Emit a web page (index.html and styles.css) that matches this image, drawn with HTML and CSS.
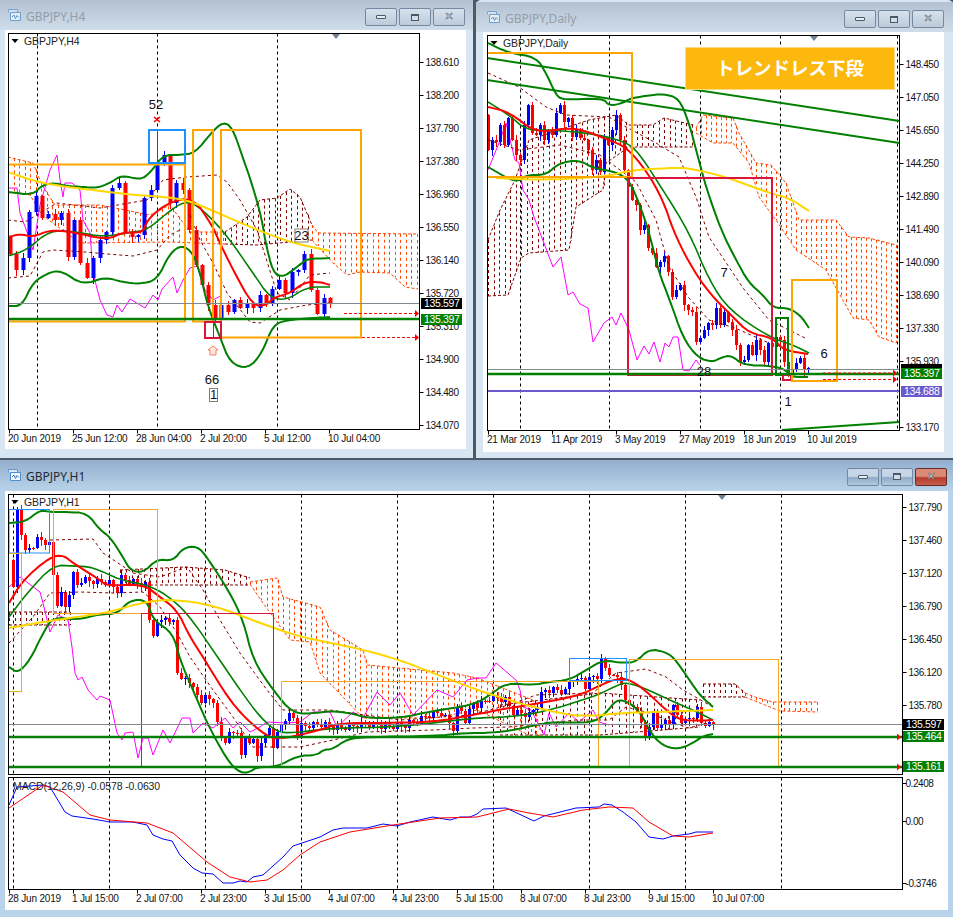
FILE: index.html
```html
<!DOCTYPE html>
<html lang="ja">
<head>
    <meta charset="UTF-8">
    <meta name="viewport" content="width=device-width, initial-scale=1.0">
    <title>GBPJPY Charts</title>
    <link rel="stylesheet" href="styles.css">
</head>
<body>
    <svg class="defs" width="0" height="0">
        <symbol id="winIcon" viewBox="0 0 15 15">
            <path d="M1.5 4.5V1.5H10.5V4" fill="#dcebf8" stroke="#5b97d3"/>
            <path d="M3.5 12.5V4.5H13.5V12.5Z" fill="#f2f8fd" stroke="#4f8fd0"/>
            <path d="M5 9L7 7L8.5 10.5L10 7.5L12 9.5" fill="none" stroke="#3f7fc0"/>
        </symbol>
    </svg>

    <div class="desk">
        <section class="window h4">
            <div class="titlebar">
                <svg class="icon"><use href="#winIcon"/></svg>
                <span class="title">GBPJPY,H4</span>
                <div class="buttons">
                    <span class="btn"><i class="min"></i></span>
                    <span class="btn"><i class="max"></i></span>
                    <span class="btn"><i class="cross">&#10005;</i></span>
                </div>
            </div>
            <div class="client"><svg id="chartH4" width="461" height="419" viewBox="5 30 461 419"></svg></div>
        </section>

        <section class="window daily">
            <div class="titlebar">
                <svg class="icon"><use href="#winIcon"/></svg>
                <span class="title">GBPJPY,Daily</span>
                <div class="buttons">
                    <span class="btn"><i class="min"></i></span>
                    <span class="btn"><i class="max"></i></span>
                    <span class="btn"><i class="cross">&#10005;</i></span>
                </div>
            </div>
            <div class="client"><svg id="chartD1" width="461" height="420" viewBox="483 32 461 420"></svg></div>
        </section>

        <section class="window h1 active">
            <div class="titlebar">
                <svg class="icon"><use href="#winIcon"/></svg>
                <span class="title">GBPJPY,H1</span>
                <div class="buttons">
                    <span class="btn"><i class="min"></i></span>
                    <span class="btn"><i class="max"></i></span>
                    <span class="btn close"><i class="cross">&#10005;</i></span>
                </div>
            </div>
            <div class="client"><svg id="chartH1" width="943" height="419" viewBox="5 491 943 419"></svg></div>
        </section>
    </div>

    <script src="chart.js"></script>
</body>
</html>
```

FILE: styles.css
```css
html, body {
    margin: 0;
    padding: 0;
}
body {
    width: 953px;
    height: 917px;
    overflow: hidden;
    background-color: #4c5a68;
    font-family: "Liberation Sans", Arial, sans-serif;
}
.defs {
    display: block;
    height: 0;
}
.desk {
    display: grid;
    grid-template-columns: 473px 477px;
    grid-template-rows: 458px 457px;
    column-gap: 3px;
    row-gap: 2px;
}
.window {
    display: flex;
    flex-direction: column;
    background: #d8e5f2;
    box-sizing: border-box;
}
.h1 {
    grid-column: 1 / 3;
    background: #b9d3ea;
    padding-bottom: 7px;
    width: 953px;
}
.daily {
    padding-top: 2px;
    border-radius: 5px 5px 0 0;
}
.titlebar {
    height: 30px;
    display: flex;
    align-items: center;
    box-sizing: border-box;
    padding: 0 8px 0 7px;
    background: linear-gradient(#b3c2d1, #cfdcea);
}
.daily .titlebar {
    padding-left: 10px;
    padding-right: 9px;
}
.h1 .titlebar {
    height: 31px;
    padding-right: 6px;
    background: linear-gradient(#94afce, #b9d3ea);
}
.icon {
    width: 15px;
    height: 15px;
    opacity: .75;
}
.h1 .icon {
    opacity: 1;
}
.title {
    margin-left: 4px;
    font-family: "Noto Sans", sans-serif;
    font-size: 12px;
    color: #919eac;
    padding-top: 2px;
}
.h1 .title {
    color: #1f2a36;
}
.buttons {
    margin-left: auto;
    display: flex;
    gap: 2px;
    margin-top: 4px;
}
.h1 .buttons {
    margin-top: 2px;
}
.btn {
    width: 30px;
    height: 16px;
    display: flex;
    align-items: center;
    justify-content: center;
    border: 1px solid #7488a0;
    border-radius: 2px;
    background: linear-gradient(#d6e1ec, #bccbdb);
}
.h1 .btn {
    background: linear-gradient(#c6d6e6 45%, #8faac8 55%, #b2cbe3);
}
.h1 .btn.close {
    background: linear-gradient(#dc8a78 45%, #b83a28 55%, #c4604c);
    border-color: #6a2a24;
}
.min {
    width: 8px;
    height: 2px;
    background: #e6edf3;
    border: 1px solid #4a5866;
    border-radius: 1px;
}
.max {
    width: 6px;
    height: 4px;
    border: 1px solid #4a5866;
    border-top-width: 2px;
    background: #d3dde8;
}
.cross {
    font-style: normal;
    font-weight: bold;
    font-size: 11px;
    line-height: 12px;
    color: #f2f5f8;
    font-family: "DejaVu Sans", sans-serif;
    -webkit-text-stroke: .5px #4a5866;
}
.client {
    width: 461px;
    margin-left: 5px;
    background: #fff;
    flex: none;
    line-height: 0;
}
.daily .client {
    margin-left: 7px;
}
.h1 .client {
    width: 943px;
}
.client svg {
    display: block;
}
.axis {
    font-family: "Liberation Sans", Arial, sans-serif;
    font-size: 10px;
    letter-spacing: -.45px;
    fill: #111;
}
.timeaxis {
    letter-spacing: -.2px;
}
.symbol {
    font-size: 10.5px;
    letter-spacing: -.1px;
    fill: #222;
}
.tag {
    font-family: "Liberation Sans", Arial, sans-serif;
    font-size: 10.5px;
    letter-spacing: -.35px;
    fill: #fff;
}
.note {
    font-family: "Liberation Sans", Arial, sans-serif;
    font-size: 13px;
    fill: #111;
    text-anchor: middle;
}
.banner {
    font-family: "Noto Sans CJK JP", sans-serif;
    font-size: 18.5px;
    font-weight: 700;
    fill: #fff;
    text-anchor: middle;
}
```

FILE: chart.js
```js
const GREEN = "#008000", RED = "#ff0000", BLUE = "#0000ff", YELLOW = "#ffd700";
const ORANGE = "#ffa500", CRIMSON = "#dc143c", DODGER = "#1e90ff";
const MAGENTA = "#ff00ff", MAROON = "#800000", CLOUD = "#ff4500";

function smooth(pts) {
    const out = [pts[0]];
    for (let i = 0; i < pts.length - 1; i++) {
        const a = pts[i], b = pts[i + 1];
        out.push([a[0] * .75 + b[0] * .25, a[1] * .75 + b[1] * .25]);
        out.push([a[0] * .25 + b[0] * .75, a[1] * .25 + b[1] * .75]);
    }
    out.push(pts[pts.length - 1]);
    return out;
}

function line(pts, color, w, dash) {
    // thick lines with many points are the indicator curves
    if (w >= 1.5 && pts.length > 4) pts = smooth(smooth(pts));
    let s = '<polyline fill="none" stroke-linejoin="round" points="' + pts.map(p => p[0].toFixed(1) + "," + p[1].toFixed(1)).join(" ") + '" stroke="' + color + '" stroke-width="' + (w || 1) + '"';
    if (dash) s += ' stroke-dasharray="' + dash + '"';
    return s + '/>';
}

function box(x1, y1, x2, y2, color, w) {
    return '<rect x="' + x1 + '" y="' + y1 + '" width="' + (x2 - x1) + '" height="' + (y2 - y1) + '" fill="none" stroke="' + color + '" stroke-width="' + (w || 2) + '"/>';
}

function text(x, y, str, cls) {
    return '<text x="' + x + '" y="' + y + '" class="' + cls + '">' + str + '</text>';
}

function interp(pts, x) {
    if (x <= pts[0][0]) return pts[0][1];
    for (let i = 1; i < pts.length; i++) {
        if (x <= pts[i][0]) {
            const a = pts[i - 1], b = pts[i];
            return a[1] + (b[1] - a[1]) * (x - a[0]) / (b[0] - a[0]);
        }
    }
    return pts[pts.length - 1][1];
}

// ichimoku cloud: dotted verticals between the two spans
function kumo(top, bot, color, step) {
    let s = line(top, color, 1, "3,2") + line(bot, color, 1, "3,2");
    const x1 = Math.max(top[0][0], bot[0][0]), x2 = Math.min(top[top.length - 1][0], bot[bot.length - 1][0]);
    for (let x = x1; x <= x2; x += step || 5.5) {
        s += line([[Math.round(x) + .5, interp(top, x)], [Math.round(x) + .5, interp(bot, x)]], color, 1, "3,3");
    }
    return s;
}

function candles(x0, dx, open, closes, w) {
    let s = "", prev = open;
    closes.forEach((c, i) => {
        const x = Math.round(x0 + dx * i);
        const up = c < prev;
        const top = Math.min(prev, c), bottom = Math.max(prev, c);
        const hi = top - 1 - (i * 7) % 5, lo = bottom + 1 + (i * 5) % 6;
        const color = up ? BLUE : RED;
        s += '<line x1="' + (x + .5) + '" x2="' + (x + .5) + '" y1="' + hi + '" y2="' + lo + '" stroke="' + color + '"/>';
        s += '<rect x="' + (x + .5 - w / 2) + '" y="' + top + '" width="' + w + '" height="' + Math.max(bottom - top, 1) + '" fill="' + color + '"/>';
        prev = c;
    });
    return s;
}

function priceAxis(axisX, labels, gap) {
    let s = "";
    labels.forEach(l => {
        s += line([[axisX, l[1] - 3.5], [axisX + 4, l[1] - 3.5]], "#000");
        s += text(axisX + (gap || 6), l[1], l[0], "axis");
    });
    return s;
}

function timeAxis(bottom, labels) {
    let s = "";
    labels.forEach(l => {
        s += line([[l[1] + .5, bottom], [l[1] + .5, bottom + 4]], "#000");
        s += text(l[1] - 1, bottom + 12, l[0], "axis timeaxis");
    });
    return s;
}

function tag(x, y, w, str, color) {
    return '<rect x="' + x + '" y="' + y + '" width="' + w + '" height="11" fill="' + color + '"/>' + (str ? text(x + 3, y + 9, str, "tag") : "");
}

function arrow(x, y) {
    return '<path d="M' + x + ' ' + (y - 3.5) + 'L' + (x + 4) + ' ' + y + 'L' + x + ' ' + (y + 3.5) + 'Z" fill="' + RED + '"/>';
}

function grid(xs, top, bottom) {
    return xs.map(x => line([[x + .5, top], [x + .5, bottom]], "#000", 1, "3,3")).join("");
}

function marker(x, y) {
    return '<path d="M' + (x - 4) + ' ' + y + 'H' + (x + 4) + 'L' + x + ' ' + (y + 5) + 'Z" fill="#708090"/>';
}

function corner(x, y, name) {
    return '<path d="M' + (x - 3.5) + ' ' + (y - 2) + 'H' + (x + 3.5) + 'L' + x + ' ' + (y + 2) + 'Z" fill="#000"/>' + text(x + 9, y + 4, name, "axis symbol");
}

function clipped(id, x1, y1, x2, y2, body) {
    return '<clipPath id="' + id + '"><rect x="' + x1 + '" y="' + y1 + '" width="' + (x2 - x1) + '" height="' + (y2 - y1) + '"/></clipPath><g clip-path="url(#' + id + ')">' + body + '</g>';
}

function drawH4() {
    const L = 8.5, R = 419.5, T = 33.5, B = 429.5;
    let b = grid([37, 157, 277], T, B);
    b += kumo([[8, 157], [33, 163], [42, 185], [55, 205], [100, 205], [150, 215], [170, 205], [190, 232], [225, 232]],
              [[8, 192], [30, 195], [42, 215], [80, 243], [170, 242], [225, 244]], CLOUD);
    b += kumo([[225, 232], [247, 217], [260, 200], [277, 198], [290, 189], [300, 197], [312, 225]],
              [[225, 244], [257, 245], [290, 242], [312, 240]], MAROON);
    b += kumo([[312, 225], [318, 233], [418, 234]],
              [[312, 240], [333, 263], [347, 275], [360, 272], [390, 273], [405, 287], [418, 289]], CLOUD);
    b += line([[8, 188], [17, 188], [20, 213], [27, 232], [33, 250], [40, 205], [50, 170], [57, 155], [60, 180], [63, 197], [65, 183], [72, 183], [80, 190], [83, 220], [90, 233], [93, 273], [100, 300], [107, 315], [113, 317], [117, 305], [122, 312], [130, 299], [145, 308], [153, 295], [158, 300], [162, 289], [173, 277], [177, 293], [183, 280], [190, 268], [197, 266], [205, 290], [213, 300], [222, 295]], MAGENTA);
    b += candles(10, 6.4, 237, [254, 270, 258, 212, 196, 218, 214, 220, 213, 257, 220, 263, 278, 258, 240, 232, 188, 183, 233, 237, 235, 198, 190, 165, 155, 203, 183, 190, 230, 265, 285, 305, 318, 305, 312, 300, 308, 304, 308, 295, 304, 289, 280, 293, 272, 270, 254, 290, 314, 298, 303], 4);
    b += line([[157.5, 130], [157.5, 165]], RED) + line([[213.5, 322], [213.5, 338]], RED);
    b += line([[8, 278], [30, 276], [43, 252], [53, 250], [85, 252], [107, 254], [133, 256], [157, 250], [170, 235], [180, 230]], MAROON, 1, "3,3");
    b += line([[8, 220], [25, 222], [57, 203], [100, 208], [147, 200], [163, 180], [187, 177], [217, 175], [227, 182], [240, 200], [257, 230], [265, 255], [277, 293], [290, 300], [310, 275], [330, 273]], MAROON, 1, "3,3");
    b += line([[190, 215], [200, 240], [213, 263], [227, 293], [250, 322], [260, 323], [280, 310], [307, 305], [330, 303]], MAROON, 1, "3,3");
    b += line([[8, 192], [33, 195], [42, 185], [55, 183], [67, 186], [83, 187], [97, 188], [110, 183], [122, 175], [140, 180], [150, 173], [163, 155], [180, 155], [195, 153], [212, 132], [223, 122], [232, 127], [242, 155], [253, 187], [262, 220], [265, 240], [273, 273], [283, 277], [293, 270], [302, 263], [307, 259], [330, 258]], GREEN, 2);
    b += line([[8, 306], [22, 306], [33, 282], [50, 272], [62, 271], [83, 285], [105, 277], [122, 282], [140, 284], [157, 280], [170, 253], [182, 245], [193, 253], [200, 273], [208, 307], [220, 337], [230, 363], [248, 369], [262, 353], [273, 325], [287, 320], [313, 318], [330, 317]], GREEN, 2);
    b += line([[8, 256], [27, 250], [50, 230], [77, 232], [103, 237], [133, 232], [147, 230], [167, 213], [183, 202], [195, 203], [223, 230], [253, 273], [270, 298], [287, 300], [307, 287], [330, 287]], GREEN, 1.6);
    b += line([[8, 237], [20, 234], [33, 237], [50, 230], [73, 232], [107, 240], [123, 232], [143, 233], [147, 220], [167, 203], [193, 197], [213, 227], [217, 237], [233, 270], [253, 306], [267, 305], [273, 298], [290, 293], [305, 282], [320, 282], [330, 285]], RED, 2);
    b += line([[8, 172], [37, 182], [67, 187], [93, 190], [133, 195], [180, 198], [207, 208], [257, 230], [293, 243], [330, 251]], YELLOW, 2);
    b += line([[8, 164.5], [185, 164.5], [185, 321.5], [8, 321.5]], ORANGE, 2);
    b += box(193, 130, 213, 321.5, ORANGE);
    b += box(221, 130, 361, 337.5, ORANGE);
    b += box(149, 130, 185, 163, DODGER);
    b += box(205, 322, 221, 338, CRIMSON);
    b += line([[8, 303.5], [R, 303.5]], "#808890");
    b += line([[8, 319], [R, 319]], GREEN, 2.4);
    b += line([[344, 313.5], [415, 313.5]], RED, 1, "3,2") + line([[362, 337.5], [415, 337.5]], RED, 1, "3,2");
    b += arrow(415, 313.5) + arrow(415, 337.5);
    let s = clipped("clipH4", L, T, R, B, b);
    s += box(L, T, R, B, "#000", 1);
    s += corner(15, 41, "GBPJPY,H4") + marker(336, 34);
    s += priceAxis(R, [["138.610", 66], ["138.200", 99], ["137.790", 132], ["137.380", 165], ["136.960", 198], ["136.550", 231], ["136.140", 264], ["135.720", 297], ["135.310", 330], ["134.900", 363], ["134.480", 396], ["134.070", 429]]);
    s += timeAxis(429.5, [["20 Jun 2019", 9], ["25 Jun 12:00", 73], ["28 Jun 04:00", 137], ["2 Jul 20:00", 201], ["5 Jul 12:00", 265], ["10 Jul 04:00", 329]]);
    s += tag(421, 298, 41, "135.597", "#000") + tag(421, 314, 41, "135.397", GREEN);
    s += text(156, 109, "52", "note");
    s += '<path d="M154 117L160 122M160 117L154 122" stroke="' + RED + '" stroke-width="1.6"/>';
    s += '<path d="M210 355V350H208L213 346L218 350H216V355Z" fill="#ffe8dc" stroke="#f08060"/>';
    s += text(212, 384, "66", "note");
    s += '<rect x="209.5" y="388.5" width="8" height="13" fill="#fff" stroke="#8a7a6a"/>' + text(213.5, 399, "1", "note");
    s += '<rect x="295" y="229" width="13" height="13" fill="#fff" stroke="#8a7a6a"/>' + text(301.5, 240, "23", "note");
    document.getElementById("chartH4").innerHTML = s;
}

function drawD1() {
    const L = 487.5, R = 899.5, T = 35.5, B = 430.5;
    let b = grid([520, 609, 700, 780, 897], T, B);
    b += kumo([[488, 240], [500, 210], [515, 180], [529, 140], [589, 120], [616, 115], [629, 125], [653, 125], [664, 118], [693, 125]],
              [[488, 296], [508, 295], [521, 258], [529, 253], [569, 250], [576, 207], [603, 190], [606, 163], [629, 147], [693, 147]], MAROON);
    b += kumo([[696, 128], [703, 115], [733, 118], [739, 133], [756, 163], [771, 165], [786, 183], [799, 220], [836, 220], [849, 237], [869, 238], [896, 245]],
              [[696, 133], [713, 143], [733, 143], [749, 163], [759, 197], [778, 223], [796, 250], [826, 270], [853, 318], [869, 320], [879, 337], [896, 343]], CLOUD, 5);
    b += line([[488, 170], [499, 143], [506, 123], [515, 160], [519, 163], [523, 190], [529, 200], [534, 217], [539, 230], [553, 267], [561, 257], [568, 295], [573, 292], [580, 304], [588, 308], [593, 342], [604, 323], [612, 317], [616, 325], [621, 313], [629, 330], [637, 360], [644, 346], [649, 354], [654, 342], [660, 362], [665, 343], [669, 347], [673, 337], [678, 337], [683, 370], [689, 371], [696, 360], [700, 365]], MAGENTA);
    b += candles(488, 4, 115, [150, 140, 142, 125, 145, 118, 140, 155, 160, 125, 105, 133, 135, 125, 140, 130, 135, 113, 105, 122, 118, 137, 130, 138, 140, 150, 170, 160, 172, 138, 145, 130, 115, 140, 170, 187, 200, 205, 230, 225, 248, 253, 267, 262, 256, 272, 297, 290, 285, 305, 310, 312, 342, 338, 330, 323, 325, 308, 325, 312, 322, 330, 345, 362, 360, 345, 355, 340, 350, 362, 343, 347, 337, 340, 362, 373, 370, 363, 358, 370, 368], 3);
    b += line([[488, 73], [519, 87], [546, 107], [566, 115], [609, 117], [626, 127], [656, 143], [679, 157], [696, 197], [709, 237], [743, 288], [769, 320], [805, 338]], MAROON, 1, "3,3");
    b += line([[488, 140], [519, 150], [560, 145], [600, 155], [636, 182], [656, 220], [669, 267], [689, 298], [709, 320], [735, 328], [769, 343]], MAROON, 1, "3,3");
    b += line([[488, 43], [509, 53], [536, 57], [546, 73], [556, 95], [563, 100], [603, 98], [609, 106], [623, 103], [631, 98], [653, 95], [663, 94], [679, 98], [689, 123], [698, 157], [706, 187], [721, 230], [736, 260], [749, 283], [763, 295], [773, 308], [789, 308], [801, 316], [809, 328]], GREEN, 2);
    b += line([[488, 167], [516, 183], [526, 175], [546, 175], [559, 163], [579, 160], [593, 168], [616, 172], [629, 180], [639, 203], [649, 232], [659, 273], [669, 298], [683, 338], [698, 358], [713, 362], [720, 358], [731, 355], [743, 365], [773, 366], [786, 370], [791, 377], [808, 377]], GREEN, 2);
    b += line([[488, 102], [509, 115], [526, 130], [549, 130], [576, 132], [599, 135], [626, 142], [639, 153], [663, 190], [689, 232], [709, 280], [729, 310], [769, 337], [793, 345], [809, 353]], GREEN, 1.6);
    b += line([[488, 107], [509, 112], [536, 133], [566, 128], [583, 130], [609, 140], [626, 147], [646, 170], [663, 200], [673, 230], [689, 263], [709, 293], [733, 317], [749, 333], [773, 338], [783, 350], [808, 354]], RED, 2);
    b += line([[496, 178], [543, 180], [603, 177], [633, 170], [669, 168], [689, 168], [726, 177], [769, 193], [789, 198], [809, 211]], YELLOW, 2);
    b += line([[487, 58], [R, 121]], GREEN, 2) + line([[487, 80], [R, 143]], GREEN, 2);
    b += line([[782, 430], [R, 422]], GREEN, 2);
    b += line([[487, 53], [632, 53], [632, 177], [487, 177]], ORANGE, 2);
    b += box(628, 178, 772, 375, CRIMSON);
    b += box(776, 318, 788, 375, GREEN);
    b += box(783, 375, 791, 380, CRIMSON);
    b += box(792, 280, 837, 381, ORANGE);
    b += line([[L, 369.5], [R, 369.5]], "#808890");
    b += line([[L, 374], [R, 374]], GREEN, 2.4);
    b += line([[L, 391], [R, 391]], "#6a5acd", 2);
    b += line([[823, 373], [893, 373]], RED, 1, "3,2") + line([[823, 379.5], [893, 379.5]], RED, 1, "3,2");
    b += arrow(893, 373) + arrow(893, 379.5);
    let s = clipped("clipD1", L, T, R, B, b);
    s += '<rect x="685.5" y="47.5" width="209" height="42" fill="#fdb80d" stroke="#ffd98a"/>' + text(790, 75, "トレンドレス下段", "banner");
    s += box(L, T, R, B, "#000", 1);
    s += corner(494, 43, "GBPJPY,Daily") + marker(814, 36);
    s += priceAxis(R, [["148.450", 68], ["147.050", 101], ["145.650", 134], ["144.250", 167], ["142.890", 200], ["141.490", 233], ["140.090", 266], ["138.690", 299], ["137.330", 332], ["135.930", 365], ["133.170", 431]]);
    s += timeAxis(430.5, [["21 Mar 2019", 488], ["11 Apr 2019", 552], ["3 May 2019", 616], ["27 May 2019", 680], ["18 Jun 2019", 744], ["10 Jul 2019", 808]]);
    s += tag(901, 364, 41, "", "#000") + tag(901, 368, 41, "135.397", GREEN) + tag(901, 386, 41, "134.688", "#6a5acd");
    s += text(724, 277, "7", "note") + text(824, 358, "6", "note") + text(704, 376, "28", "note") + text(788, 406, "1", "note");
    document.getElementById("chartD1").innerHTML = s;
}

const H1_CLOSES = [[13, 590], [17, 510], [21, 532], [25, 553], [29, 548], [33, 545], [37, 540], [41, 540], [45, 542], [49, 545], [53, 575], [57, 603], [61, 595], [65, 607], [69, 592], [73, 575], [77, 585], [81, 580], [110, 583], [114, 588], [118, 590], [121, 578], [125, 580], [145, 585], [149, 620], [153, 633], [157, 625], [161, 620], [165, 615], [169, 625], [173, 620], [177, 670], [181, 682], [185, 678], [189, 680], [193, 690], [197, 695], [201, 700], [205, 698], [213, 700], [217, 725], [221, 738], [225, 740], [229, 735], [233, 733], [237, 730], [241, 758], [245, 738], [249, 740], [253, 742], [257, 756], [261, 740], [265, 738], [269, 728], [273, 745], [277, 735], [281, 725], [285, 718], [289, 716], [293, 718], [297, 735], [301, 726], [320, 724], [340, 728], [360, 725], [400, 726], [420, 720], [427, 715], [440, 712], [453, 728], [458, 705], [465, 720], [473, 703], [478, 706], [490, 697], [505, 700], [513, 712], [520, 713], [530, 715], [538, 702], [543, 690], [555, 690], [566, 692], [569, 682], [573, 678], [577, 682], [581, 678], [585, 686], [589, 680], [593, 676], [597, 676], [601, 662], [605, 668], [609, 672], [613, 678], [617, 677], [621, 682], [625, 703], [629, 705], [633, 704], [637, 715], [641, 722], [645, 733], [649, 730], [653, 712], [657, 725], [661, 727], [665, 720], [669, 722], [673, 708], [677, 715], [681, 720], [685, 722], [689, 718], [693, 715], [697, 710], [701, 723], [705, 723], [709, 725], [713, 724]];

function drawH1() {
    const L = 8.5, R = 902.5, T = 494.5, B = 774.5, MT = 777.5, MB = 889.5;
    const XS = [13, 109, 205, 301, 397, 493, 589, 685, 781];
    let b = grid(XS, T, B);
    b += kumo([[9, 612], [70, 612]], [[9, 625], [70, 625]], MAROON);
    b += kumo([[120, 570], [185, 567], [225, 570], [250, 578]], [[120, 585], [250, 585]], MAROON, 6);
    b += kumo([[250, 582], [277, 578], [283, 597], [320, 607], [330, 630], [363, 650], [367, 665], [453, 673], [477, 678], [533, 700], [540, 730]],
              [[250, 584], [263, 603], [290, 640], [310, 642], [320, 673], [343, 697], [363, 718], [433, 718], [477, 710], [533, 737], [540, 735]], CLOUD);
    b += kumo([[500, 705], [600, 693], [700, 700]], [[500, 735], [600, 735], [700, 727]], MAROON, 7);
    b += kumo([[703, 684], [735, 684], [745, 693]], [[703, 697], [745, 697]], MAROON);
    b += kumo([[745, 693], [755, 697], [773, 702], [818, 702]], [[745, 697], [760, 703], [780, 711], [818, 712]], CLOUD);
    b += line([[9, 587], [20, 577], [40, 592], [43, 603], [50, 632], [58, 615], [68, 620], [72, 647], [75, 673], [78, 680], [82, 677], [88, 690], [97, 700], [100, 696], [110, 700], [117, 733], [122, 740], [125, 733], [133, 732], [138, 758], [143, 738], [148, 738], [153, 755], [163, 730], [170, 743], [182, 718], [190, 718], [193, 733], [203, 723], [213, 728], [225, 718], [233, 728], [240, 722], [250, 732], [260, 727], [267, 722], [287, 723], [300, 722], [313, 712], [330, 712], [337, 727], [353, 712], [363, 718], [377, 692], [390, 705], [400, 693], [413, 715], [437, 690], [453, 697], [467, 680], [477, 678], [486, 678], [496, 663], [516, 680], [520, 690], [523, 707], [531, 710], [544, 735], [549, 713], [556, 727], [569, 713], [579, 722], [593, 710], [599, 722], [609, 725]], MAGENTA);
    const closes = [];
    for (let x = 13, i = 0; x <= 713; x += 4, i++) {
        // long flat stretches get some small up and down moves
        const y = interp(H1_CLOSES, x);
        closes.push(Math.round(y + (i % 3 - 1) * 3));
    }
    b += candles(13, 4, 560, closes, 3);
    b += line([[50, 540], [93, 539], [103, 553], [133, 573], [160, 577], [187, 567], [203, 590], [220, 620], [240, 653], [267, 690], [283, 710], [330, 710], [400, 720], [470, 715], [509, 705], [536, 695], [593, 693], [616, 673], [646, 669], [666, 677], [683, 690], [713, 707]], MAROON, 1, "3,3");
    b += line([[9, 643], [33, 617], [50, 593], [80, 592], [113, 593], [143, 592], [160, 607], [177, 633], [190, 657], [213, 690], [233, 717], [253, 747], [300, 747], [333, 740], [367, 732], [433, 730], [473, 728], [509, 727], [576, 720], [609, 720], [626, 707], [650, 713], [673, 723], [689, 728], [706, 723]], MAROON, 1, "3,3");
    b += line([[9, 523], [25, 522], [40, 510], [50, 512], [67, 512], [87, 513], [100, 530], [110, 537], [123, 557], [130, 570], [143, 573], [157, 559], [173, 561], [183, 548], [197, 546], [207, 557], [230, 593], [243, 620], [253, 660], [273, 690], [293, 714], [317, 713], [330, 711], [350, 713], [367, 718], [400, 718], [433, 711], [473, 705], [490, 695], [506, 683], [533, 685], [549, 682], [569, 680], [586, 670], [603, 660], [623, 663], [636, 662], [649, 649], [666, 652], [676, 660], [696, 690], [703, 698], [713, 707]], GREEN, 2);
    b += line([[9, 667], [18, 673], [30, 660], [43, 633], [53, 617], [77, 620], [100, 614], [117, 614], [130, 600], [147, 600], [153, 620], [173, 633], [180, 660], [193, 690], [207, 723], [227, 760], [240, 773], [250, 772], [257, 767], [277, 767], [297, 756], [317, 755], [323, 750], [333, 749], [347, 739], [367, 737], [433, 736], [467, 733], [486, 733], [509, 731], [536, 725], [553, 722], [593, 723], [606, 713], [616, 700], [626, 701], [639, 710], [653, 737], [666, 747], [679, 749], [693, 743], [703, 736], [713, 734]], GREEN, 2);
    b += line([[9, 617], [27, 593], [53, 565], [73, 566], [93, 567], [120, 580], [147, 585], [167, 595], [187, 613], [213, 650], [240, 690], [260, 717], [277, 732], [293, 733], [333, 728], [400, 727], [473, 718], [509, 717], [543, 712], [593, 697], [616, 686], [626, 682], [649, 690], [676, 703], [693, 710], [713, 720]], GREEN, 1.6);
    b += line([[9, 603], [23, 580], [50, 557], [63, 555], [73, 563], [100, 580], [107, 586], [143, 584], [160, 597], [177, 610], [190, 637], [203, 657], [223, 690], [240, 713], [267, 737], [283, 739], [320, 730], [340, 723], [383, 723], [433, 722], [473, 715], [509, 708], [576, 697], [603, 684], [613, 680], [626, 678], [643, 688], [673, 717], [689, 721], [713, 720]], RED, 2);
    b += line([[9, 628], [43, 622], [77, 617], [110, 612], [140, 603], [170, 599], [213, 605], [260, 623], [300, 637], [357, 648], [400, 660], [433, 673], [477, 690], [509, 700], [533, 707], [569, 715], [589, 716], [623, 713], [656, 712], [713, 710]], YELLOW, 2);
    b += box(9, 509.5, 49.5, 553, DODGER, 1);
    b += box(53.5, 509.5, 157.5, 613.5, "#f5a623", 1);
    b += box(8, 553.5, 21.5, 691.5, "#f5a623", 1);
    b += box(141.5, 613.5, 273.5, 767, CRIMSON, 1);
    b += box(281.5, 681.5, 598.5, 767, "#f5a623", 1);
    b += box(569.5, 658.5, 626.5, 680.5, DODGER, 1);
    b += box(629.5, 659.5, 778.5, 767, "#f5a623", 1);
    b += line([[L, 724.5], [R, 724.5]], "#808890");
    b += line([[L, 737], [R, 737]], GREEN, 2.4);
    b += line([[L, 767], [R, 767]], GREEN, 2.4);
    b += arrow(897, 737) + arrow(897, 767);
    let s = clipped("clipH1", L, T, R, B, b);

    let m = grid(XS, MT, MB);
    m += line([[9, 805], [17, 787], [43, 785], [50, 787], [65, 812], [72, 816], [93, 819], [110, 822], [133, 822], [147, 825], [153, 835], [163, 839], [172, 841], [180, 855], [193, 868], [202, 873], [213, 874], [223, 883], [233, 883], [240, 881], [247, 882], [253, 877], [263, 875], [283, 857], [293, 846], [320, 837], [333, 830], [343, 828], [367, 828], [383, 824], [397, 826], [410, 822], [433, 817], [450, 820], [460, 817], [470, 817], [477, 814], [483, 809], [506, 808], [519, 814], [534, 821], [544, 816], [552, 814], [576, 808], [599, 807], [604, 804], [612, 805], [623, 812], [636, 822], [649, 837], [663, 839], [673, 836], [689, 834], [696, 832], [713, 832]], BLUE);
    m += line([[9, 808], [43, 785], [63, 792], [90, 815], [110, 820], [147, 823], [173, 833], [207, 862], [230, 877], [250, 882], [267, 880], [283, 870], [300, 855], [320, 842], [350, 832], [393, 825], [440, 818], [477, 817], [509, 809], [529, 813], [553, 817], [583, 810], [609, 807], [633, 808], [649, 822], [673, 836], [689, 837], [713, 833]], RED);
    s += clipped("clipMacd", L, MT, R, MB, m);

    s += box(L, T, R, B, "#000", 1) + box(L, MT, R, MB, "#000", 1);
    s += corner(15, 502, "GBPJPY,H1") + marker(722, 495);
    s += priceAxis(R, [["137.790", 511], ["137.460", 544], ["137.120", 577], ["136.790", 610], ["136.450", 643], ["136.120", 676], ["135.780", 709]]);
    s += priceAxis(R, [["0.2408", 787], ["0.00", 825], ["-0.3746", 887]], 3);
    s += timeAxis(889.5, [["28 Jun 2019", 9], ["1 Jul 15:00", 73], ["2 Jul 07:00", 137], ["2 Jul 23:00", 201], ["3 Jul 15:00", 265], ["4 Jul 07:00", 329], ["4 Jul 23:00", 393], ["5 Jul 15:00", 457], ["8 Jul 07:00", 521], ["8 Jul 23:00", 585], ["9 Jul 15:00", 649], ["10 Jul 07:00", 713]]);
    s += tag(903, 719, 41, "135.597", "#000") + tag(903, 731, 41, "135.464", GREEN) + tag(903, 761, 41, "135.161", GREEN);
    s += text(13, 790, "MACD(12,26,9) -0.0578 -0.0630", "axis symbol");
    document.getElementById("chartH1").innerHTML = s;
}

drawH4();
drawD1();
drawH1();
```
